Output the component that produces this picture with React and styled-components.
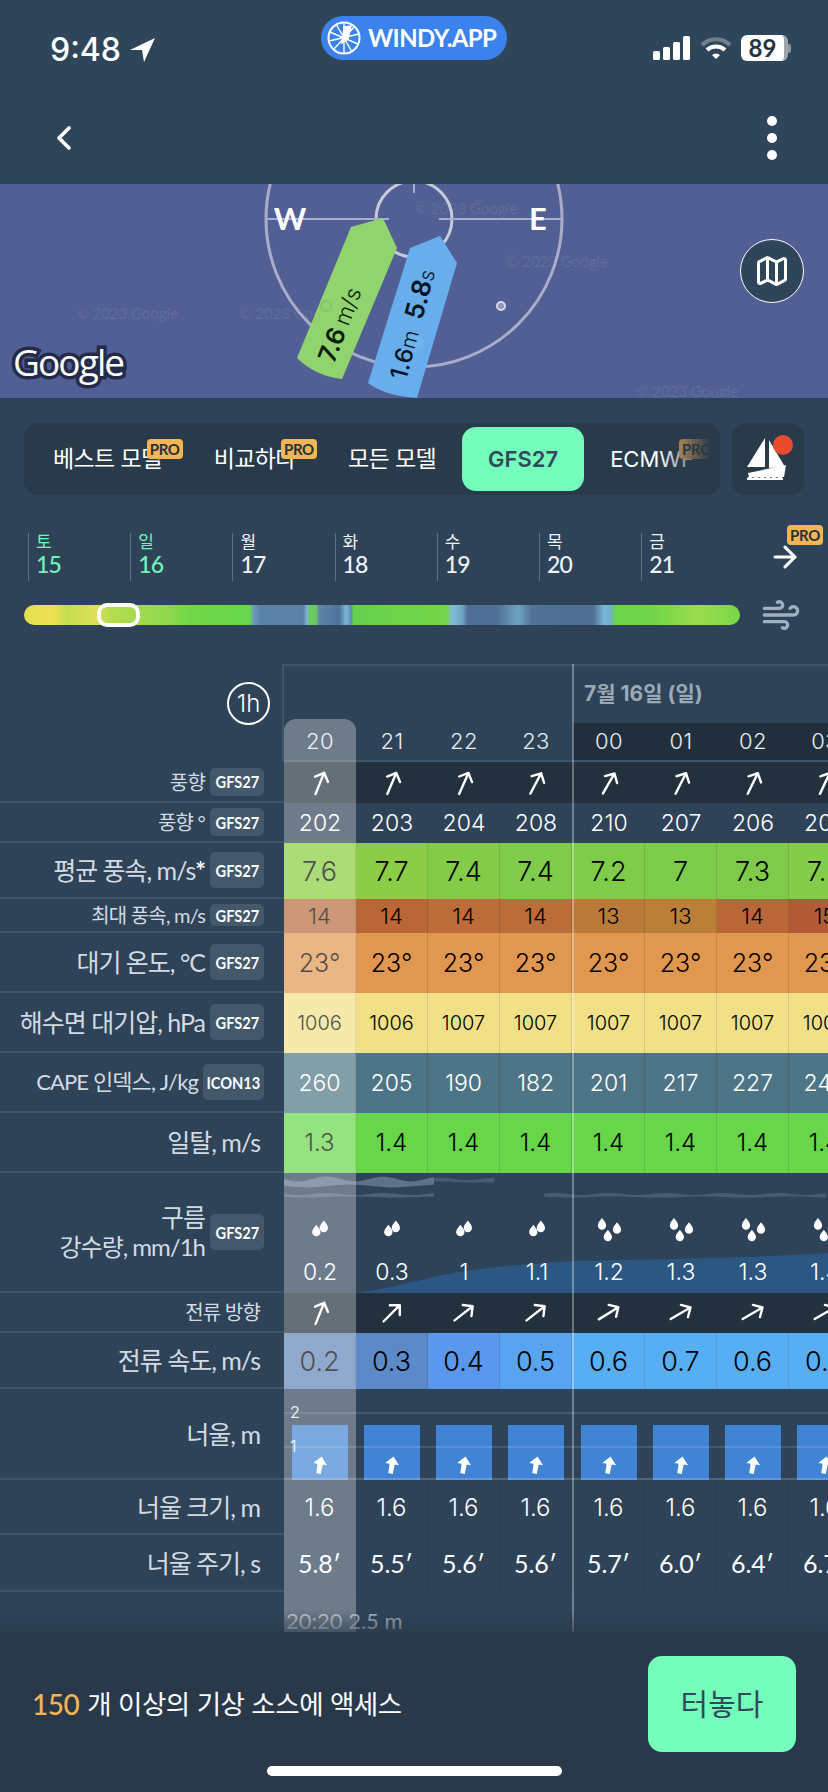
import React from "react";
import styled, { createGlobalStyle } from "styled-components";
import { ArrowRight, ChevronLeft, Map as MapIcon, Wind } from "lucide-react";

const NUM = `Inter, "Noto Sans", sans-serif`;
const KR = `Inter, "Noto Sans CJK KR", sans-serif`;
const LABEL = `Lato, "Noto Sans CJK KR", "Noto Sans", sans-serif`;

const Global = createGlobalStyle`
  html, body { margin: 0; padding: 0; background: #2e4358; }
  * { box-sizing: border-box; }
`;

const Page = styled.div`
  position: relative;
  width: 828px;
  height: 1792px;
  overflow: hidden;
  background: #2e4358;
  color: #fff;
  font-family: ${KR};
`;

/* top bar */
const Header = styled.header`
  height: 184px;
  background: #2f4559;
`;
const StatusBar = styled.div`
  height: 90px;
  display: grid;
  grid-template-columns: 321px 186px 1fr;
  align-items: start;
`;
const TimeBox = styled.div`
  display: flex;
  align-items: center;
  gap: 9px;
  padding: 31px 0 0 50px;
  font: 500 32px/38px ${NUM};
`;
const Pill = styled.div`
  margin-top: 16px;
  height: 44px;
  border-radius: 22px;
  background: #3b82ec;
  display: flex;
  align-items: center;
  gap: 7px;
  padding-left: 6px;
  font: 700 24px/1 ${LABEL};
  letter-spacing: -0.6px;
`;
const StatusIcons = styled.div`
  display: flex;
  align-items: center;
  gap: 9px;
  padding: 35px 0 0 146px;
`;
const Battery = styled.div`
  width: 47px;
  height: 26px;
  border-radius: 6px;
  background: #fff;
  color: #26333f;
  font: 700 24px/26px ${LABEL};
  text-align: center;
  margin-right: -4px;
  border-right: 4px solid #9aa5ae;
`;
const BatteryTip = styled.div`
  width: 3px;
  height: 9px;
  border-radius: 0 2px 2px 0;
  background: #8b98a3;
  margin-left: -5px;
`;
const NavBar = styled.div`
  height: 94px;
  display: flex;
  align-items: center;
  justify-content: space-between;
  padding: 2px 51px 0 44px;
`;
const Dots = styled.div`
  display: flex;
  flex-direction: column;
  gap: 7px;
  & > i {
    display: block;
    width: 10px;
    height: 10px;
    border-radius: 50%;
    background: #fff;
  }
`;

/* map */
const MapArea = styled.section`
  position: relative;
  height: 214px;
  overflow: hidden;
  background: #515f95;
`;
const MapDrawing = styled.svg`
  position: absolute;
  inset: 0;
  display: block;
`;
const Watermark = styled.span`
  position: absolute;
  left: ${(p) => p.$x}px;
  top: ${(p) => p.$y}px;
  font: 400 15px/18px ${LABEL};
  color: rgba(255, 255, 255, 0.09);
  white-space: nowrap;
`;
const GoogleMark = styled.span`
  position: absolute;
  left: 13px;
  top: 154px;
  font: 500 37px/48px "Open Sans", sans-serif;
  letter-spacing: -1.9px;
  color: #fff;
  -webkit-text-stroke: 7px #232b48;
  paint-order: stroke fill;
`;
const MapButton = styled.button`
  position: absolute;
  left: 740px;
  top: 55px;
  width: 64px;
  height: 64px;
  padding: 0;
  border-radius: 50%;
  border: 1.5px solid #fff;
  background: #2f4559;
  color: #fff;
  display: flex;
  align-items: center;
  justify-content: center;
`;

/* model tabs */
const TabsRow = styled.div`
  display: flex;
  gap: 12px;
  padding: 25px 24px 0;
`;
const Tabs = styled.nav`
  position: relative;
  width: 696px;
  height: 72px;
  border-radius: 14px;
  background: #293a4a;
  overflow: hidden;
  display: flex;
  align-items: center;
  padding-left: 3px;
  &::after {
    content: "";
    position: absolute;
    top: 0;
    bottom: 0;
    right: 0;
    width: 62px;
    background: linear-gradient(90deg, rgba(41, 58, 74, 0), #293a4a 85%);
  }
`;
const Tab = styled.div`
  position: relative;
  flex: none;
  height: 64px;
  padding: 0 26px;
  border-radius: 14px;
  display: flex;
  align-items: center;
  white-space: nowrap;
  font: ${(p) => (p.$active ? 600 : 400)} ${(p) => (p.$latin ? 22 : 23)}px/1 ${KR};
  letter-spacing: ${(p) => (p.$latin ? 0 : -0.6)}px;
  color: ${(p) => (p.$active ? "#2f4a5a" : "#fff")};
  background: ${(p) => (p.$active ? "#74fdbb" : "transparent")};
`;
const ProBadge = styled.span`
  position: absolute;
  top: ${(p) => p.$top ?? 12}px;
  right: ${(p) => p.$right ?? 5}px;
  width: 36px;
  height: 20px;
  border-radius: 4px;
  background: #f4b557;
  color: #26303a;
  font: 700 15px/20px ${LABEL};
  letter-spacing: -0.3px;
  text-align: center;
`;
const BoatButton = styled.div`
  width: 72px;
  height: 72px;
  border-radius: 14px;
  background: #293a4a;
  display: flex;
  align-items: center;
  justify-content: center;
`;
const BoatIcon = styled.svg`
  overflow: visible;
  margin-left: -3px;
`;

/* days strip */
const DaysRow = styled.div`
  position: relative;
  display: flex;
  height: 48px;
  margin-top: 38px;
  padding-left: 28px;
`;
const Day = styled.div`
  width: 102.2px;
  border-left: 1px solid #5f7283;
  padding-left: 7px;
  color: ${(p) => (p.$accent ? "#72f5b8" : "#eef2f5")};
`;
const DayName = styled.div`
  font: 400 17px/19px ${KR};
`;
const DayNum = styled.div`
  font: 500 23px/25px ${LABEL};
  letter-spacing: -0.8px;
`;
const MoreDays = styled.div`
  position: absolute;
  left: 768px;
  top: 7px;
  color: #fff;
`;

/* overview bar */
const BarRow = styled.div`
  display: flex;
  align-items: center;
  margin-top: 24px;
  padding-left: 24px;
  height: 20px;
`;
const Overview = styled.div`
  position: relative;
  width: 716px;
  height: 20px;
  border-radius: 10px;
  background: linear-gradient(90deg, #e6e04e 0%, #f0e050 4%, #c3de50 6%, #dfe056 10%, #b7dc50 12%, #8fd84d 20%, #72d84a 23%, #68d64a 30%, #65d54b 31.6%, #6c9dc0 32%, #5a82a8 33%, #5b80a8 39%, #7fb0d0 39.5%, #5fd05a 40%, #6cc860 40.8%, #5d85a8 41.2%, #4f7299 44%, #7ab5d8 45%, #5b8dae 45.7%, #66d04c 46%, #74d648 59%, #80bcd8 59.8%, #72a6c6 61.2%, #4e6e96 62%, #4f7096 66%, #70a4c4 69%, #4f7296 71%, #4f6f95 79.5%, #7cb8d8 81%, #70b0c8 82%, #6ad44c 82.5%, #72d64a 88%, #9cdc4c 94%, #7bd748 100%);
`;
const Thumb = styled.div`
  position: absolute;
  left: 73px;
  top: -2px;
  width: 43px;
  height: 24px;
  border-radius: 10px;
  border: 4px solid #fff;
`;
const WindBox = styled.div`
  margin-left: 21px;
  color: #9fb0c0;
  display: flex;
`;

/* table */
const Table = styled.section`
  position: relative;
  margin-top: 39px;
  height: 968px;
  overflow: hidden;
`;
const NowColumn = styled.div`
  position: absolute;
  left: 284px;
  top: 55px;
  bottom: 0;
  width: 72px;
  border-radius: 12px 12px 0 0;
  background: rgba(255, 255, 255, 0.3);
  pointer-events: none;
`;
const DayLine = styled.div`
  position: absolute;
  left: 572px;
  top: 0;
  bottom: 0;
  width: 2px;
  background: rgba(255, 255, 255, 0.33);
  pointer-events: none;
`;
const HeadRow = styled.div`
  display: flex;
  height: 98px;
`;
const HeadLabel = styled.div`
  width: 284px;
  flex: none;
  border-right: 2px solid #3e5568;
  display: flex;
  justify-content: flex-end;
  padding: 18px 12px 0 0;
`;
const OneHour = styled.div`
  width: 43px;
  height: 43px;
  border-radius: 50%;
  border: 2px solid #fff;
  font: 300 24px/39px ${NUM};
  text-align: center;
`;
const HeadTrack = styled.div`
  flex: 1;
  min-width: 0;
  border-top: 2px solid #3e5568;
  display: flex;
  flex-direction: column;
`;
const DateTitle = styled.div`
  height: 57px;
  padding: 13px 0 0 300px;
  font: 700 21px/30px ${KR};
  color: #9aa9b6;
`;
const Hours = styled.div`
  display: flex;
  height: 39px;
  border-bottom: 2px solid #3e5568;
`;
const Hour = styled.div`
  flex: none;
  width: 72px;
  font: 300 22px/37px ${NUM};
  letter-spacing: 0.4px;
  text-align: center;
  color: #e8edf1;
  background: ${(p) => (p.$dark ? "#212f3c" : "transparent")};
  &:nth-child(5) {
    margin-left: 1px;
  }
`;
const Row = styled.div`
  display: flex;
  height: ${(p) => p.$h}px;
`;
const Label = styled.div`
  position: relative;
  width: 284px;
  flex: none;
  display: flex;
  align-items: center;
  justify-content: flex-end;
  gap: 5px;
  padding-right: ${(p) => (p.$chip ? 20 : 24)}px;
  border-bottom: 2px solid #3e5568;
  text-align: right;
  white-space: nowrap;
  color: #d3dbe2;
  font: 400 ${(p) => p.$size}px/1.2 ${LABEL};
  letter-spacing: -0.04em;
`;
const Chip = styled.span`
  flex: none;
  width: ${(p) => p.$w || 54}px;
  height: ${(p) => p.$h}px;
  border-radius: 5px;
  background: #43586b;
  color: #fff;
  display: flex;
  align-items: center;
  justify-content: center;
  font: 700 17px/1 ${LABEL};
  letter-spacing: 0;
`;
const ChipText = styled.span`
  display: block;
  transform: scaleX(0.86);
`;
const Star = styled.b`
  color: #fff;
  font-weight: 700;
`;
const Small = styled.div`
  font-size: ${(p) => p.$size}px;
  line-height: 1.25;
`;
const Track = styled.div`
  position: relative;
  flex: 1;
  min-width: 0;
  display: flex;
  overflow: hidden;
`;
const Cell = styled.div`
  position: relative;
  flex: none;
  width: 72px;
  display: flex;
  align-items: center;
  justify-content: center;
  background: ${(p) => p.$bg || "transparent"};
  color: ${(p) => p.$color || "#fff"};
  font: ${(p) => (p.$narrow ? "400" : "300")} ${(p) => p.$size || 23}px/1 ${(p) => (p.$narrow ? LABEL : NUM)};
  ${(p) => (p.$rule ? "border-right: 1px solid rgba(0, 0, 0, 0.1);" : "")}
  &:nth-child(5) {
    margin-left: 1px;
  }
`;
const Gap = styled.div`
  position: absolute;
  left: 288px;
  width: 1px;
  top: 0;
  bottom: 0;
  background: ${(p) => p.$bg};
`;
const RainCell = styled(Cell)`
  flex-direction: column;
  justify-content: flex-start;
  padding-top: 45px;
`;
const Drops = styled.svg`
  display: block;
  width: 25px;
  height: 30px;
`;
const RainValue = styled.div`
  margin-top: 13px;
`;
const Strip = styled.svg`
  position: absolute;
  inset: 0;
  display: block;
`;
const SwellCell = styled(Cell)`
  align-items: flex-end;
`;
const SwellBar = styled.div`
  width: 56px;
  height: 55px;
  background: #4183d4;
  display: flex;
  align-items: flex-end;
  justify-content: center;
  padding-bottom: 6px;
`;
const GridLine = styled.div`
  position: absolute;
  left: 0;
  right: 0;
  top: ${(p) => p.$top}px;
  height: 2px;
  background: rgba(255, 255, 255, ${(p) => p.$alpha ?? 0.12});
`;
const Scale = styled.span`
  position: absolute;
  left: 6px;
  top: ${(p) => p.$top}px;
  font: 400 16px/18px ${NUM};
  color: #dfe6ea;
`;
const ScrollNote = styled.div`
  height: 40px;
  padding: 18px 0 0 286px;
  font: 400 22px/22px ${LABEL};
  color: rgba(255, 255, 255, 0.62);
`;

/* footer */
const Footer = styled.footer`
  position: relative;
  height: 160px;
  background: #29394a;
  display: flex;
  justify-content: space-between;
  padding: 24px 32px 0;
  &::before {
    content: "";
    position: absolute;
    left: 0;
    right: 0;
    top: -22px;
    height: 22px;
    background: linear-gradient(180deg, rgba(41, 57, 74, 0), rgba(41, 57, 74, 0.6));
  }
`;
const Offer = styled.div`
  height: 96px;
  display: flex;
  align-items: center;
  gap: 8px;
  font: 400 26.5px/1 ${KR};
  letter-spacing: -0.5px;
`;
const Gold = styled.span`
  color: #f4b557;
  font: 500 28px/1 ${LABEL};
`;
const Release = styled.button`
  width: 148px;
  height: 96px;
  border: 0;
  border-radius: 14px;
  background: #74fdbb;
  color: #2f4a5a;
  font: 400 30px/1 ${KR};
`;
const HomeBar = styled.div`
  position: absolute;
  left: 267px;
  top: 134px;
  width: 295px;
  height: 10px;
  border-radius: 5px;
  background: #fff;
`;

const HOURS = ["20", "21", "22", "23", "00", "01", "02", "03"];
const DIRS = [202, 203, 204, 208, 210, 207, 206, 205];
const CURRENT_DIRS = [22, 45, 52, 52, 58, 60, 60, 60];
const WIND = ["7.6", "7.7", "7.4", "7.4", "7.2", "7", "7.3", "7.5"];
const WIND_BG = ["#88cd3a", "#8ccd47", "#84cb48", "#80cb49", "#7fcb4a", "#7ccb4a", "#7fca4a", "#84cc4a"];
const GUST = ["14", "14", "14", "14", "13", "13", "14", "15"];
const GUST_BG = ["#b56a3c", "#b96737", "#bb6c39", "#ba6c39", "#bb7a38", "#bb7f38", "#b96738", "#b25a35"];
const PRESSURE = ["1006", "1006", "1007", "1007", "1007", "1007", "1007", "1007"];
const CAPE = ["260", "205", "190", "182", "201", "217", "227", "245"];
const SWELL_LIFT = ["1.3", "1.4", "1.4", "1.4", "1.4", "1.4", "1.4", "1.4"];
const RAIN = ["0.2", "0.3", "1", "1.1", "1.2", "1.3", "1.3", "1.4"];
const SPEED = ["0.2", "0.3", "0.4", "0.5", "0.6", "0.7", "0.6", "0.6"];
const SPEED_BG = ["#5f85b8", "#5c8ac8", "#5a98ee", "#59a4f1", "#58aef2", "#58aef2", "#58aef2", "#58aef2"];
const PERIOD = ["5.8′", "5.5′", "5.6′", "5.6′", "5.7′", "6.0′", "6.4′", "6.7′"];

function DirArrow({ deg }) {
  return (
    <svg width="30" height="30" viewBox="0 0 30 30" style={{ transform: `rotate(${deg}deg)` }}>
      <path d="M15 27V4M8 11l7-7 7 7" fill="none" stroke="#fff" strokeWidth="2.4" strokeLinecap="round" strokeLinejoin="round" />
    </svg>
  );
}

function SwellArrow() {
  return (
    <svg width="14" height="18" viewBox="0 0 16 20" style={{ transform: "rotate(10deg)" }}>
      <path d="M8 0l8 9h-5l-.4 11H5.4L5 9H0z" fill="#fff" />
    </svg>
  );
}

function RainDrops({ many }) {
  const drop = (x, y) => `M${x} ${y}c3 4 5 6 5 9a5 5 0 0 1-10 0c0-3 2-5 5-9z`;
  return many ? (
    <Drops viewBox="0 0 30 36">
      <path fill="#fff" d={drop(6, 0)} />
      <path fill="#fff" d={drop(24, 5)} />
      <path fill="#fff" d={drop(13, 14)} />
    </Drops>
  ) : (
    <Drops viewBox="0 0 30 36">
      <path fill="#fff" d={drop(19, 3)} />
      <path fill="#fff" d={drop(10, 8)} />
    </Drops>
  );
}

// wobbly band for the cloud layers
function band(x0, x1, y, h) {
  let top = `M${x0} ${y}`;
  let bottom = "";
  for (let x = x0; x <= x1; x += 6) {
    const a = Math.sin(x / 9) * h * 0.35;
    const b = Math.sin(x / 14) * h * 0.2;
    top += `L${x} ${(y + a).toFixed(1)}`;
    bottom = `L${x} ${(y + h + b).toFixed(1)}` + bottom;
  }
  return `${top}${bottom}Z`;
}

function ModelChip({ h, w, children }) {
  return (
    <Chip $h={h} $w={w}>
      <ChipText>{children}</ChipText>
    </Chip>
  );
}

function TopBar() {
  return (
    <Header>
      <StatusBar>
        <TimeBox>
          9:48
          <svg width="26" height="26" viewBox="0 0 26 26">
            <path d="M0 13L25 1 14 25l-2-12z" fill="#fff" />
          </svg>
        </TimeBox>
        <Pill>
          <svg width="34" height="34" viewBox="0 0 34 34" fill="none" stroke="#fff" strokeWidth="1.4">
            <circle cx="17" cy="17" r="15.5" strokeWidth="2" />
            <path d="M3 11l28 12M9 3l16 28M17 2v30M2 20l30-7M28 5L6 29" />
            <path d="M17 6l7-1-3 13-6 4z" fill="#fff" />
          </svg>
          WINDY.APP
        </Pill>
        <StatusIcons>
          <svg width="38" height="24" viewBox="0 0 38 24" fill="#fff">
            <rect x="0" y="15" width="7" height="9" rx="1.5" />
            <rect x="10" y="11" width="7" height="13" rx="1.5" />
            <rect x="20" y="6" width="7" height="18" rx="1.5" />
            <rect x="30" y="0" width="7" height="24" rx="1.5" />
          </svg>
          <svg width="32" height="24" viewBox="0 0 32 24" fill="none" strokeWidth="4">
            <path d="M2 9a20 20 0 0 1 28 0" stroke="#6f808e" />
            <path d="M7 14a13 13 0 0 1 18 0" stroke="#fff" />
            <path d="M12 19l4 4 4-4a6 6 0 0 0-8 0z" fill="#fff" stroke="none" />
          </svg>
          <Battery>89</Battery>
          <BatteryTip />
        </StatusIcons>
      </StatusBar>
      <NavBar>
        <ChevronLeft size={40} strokeWidth={2.2} color="#fff" />
        <Dots>
          <i />
          <i />
          <i />
        </Dots>
      </NavBar>
    </Header>
  );
}

function MapPanel() {
  return (
    <MapArea>
      <Watermark $x={415} $y={15}>© 2023 Google</Watermark>
      <Watermark $x={506} $y={68}>© 2023 Google</Watermark>
      <Watermark $x={76} $y={120}>© 2023 Google</Watermark>
      <Watermark $x={239} $y={120}>© 2023 Google</Watermark>
      <Watermark $x={636} $y={198}>© 2023 Google</Watermark>
      <MapDrawing width="828" height="214" viewBox="0 184 828 214">
        <circle cx="414" cy="219" r="148" fill="none" stroke="#a9aec8" strokeWidth="3" />
        <circle cx="414" cy="219" r="38" fill="none" stroke="#c6cad9" strokeWidth="3" />
        <path d="M266 219H389M439 219H562M414 184V193" stroke="#a9aec8" strokeWidth="2" fill="none" />
        <circle cx="501" cy="306" r="4" fill="#8e95b5" stroke="#d8dae5" strokeWidth="2" />
        <text x="290" y="230" textAnchor="middle" fill="#fff" fontFamily={LABEL} fontWeight="700" fontSize="31">W</text>
        <text x="538" y="230" textAnchor="middle" fill="#fff" fontFamily={LABEL} fontWeight="700" fontSize="31">E</text>
        <path d="M383 218L397 248 342 379Q315 376 297 358L351 227Z" fill="#90d36f" />
        <path d="M440 236L457 263 417 398Q385 396 368 383L410 248Z" fill="#68aeed" />
        <circle cx="326" cy="306" r="5" fill="none" stroke="#84c664" strokeWidth="2" />
        <circle cx="415" cy="343" r="9" fill="#72b3ee" />
        <text transform="translate(334 364) rotate(-69)" fontFamily={NUM} fill="#0c1a10">
          <tspan fontSize="25" fontWeight="600">7.6</tspan>
          <tspan fontSize="22" fontWeight="300" dx="5">m/s</tspan>
        </text>
        <text transform="translate(406 381) rotate(-75)" fontFamily={NUM} fill="#08141f">
          <tspan fontSize="24" fontWeight="500">1.6</tspan>
          <tspan fontSize="21" fontWeight="300">m</tspan>
          <tspan fontSize="26" fontWeight="600" dx="12">5.8</tspan>
          <tspan fontSize="21" fontWeight="300">s</tspan>
        </text>
      </MapDrawing>
      <GoogleMark>Google</GoogleMark>
      <MapButton aria-label="map">
        <MapIcon size={36} strokeWidth={2} />
      </MapButton>
    </MapArea>
  );
}

function ModelTabs() {
  return (
    <TabsRow>
      <Tabs>
        <Tab>베스트 모델<ProBadge>PRO</ProBadge></Tab>
        <Tab>비교하다<ProBadge>PRO</ProBadge></Tab>
        <Tab>모든 모델</Tab>
        <Tab $active $latin>GFS27</Tab>
        <Tab $latin>ECMWF<ProBadge>PRO</ProBadge></Tab>
      </Tabs>
      <BoatButton>
        <BoatIcon width="44" height="44" viewBox="0 0 44 44" fill="#fff">
          <path d="M20 1V30H2z" />
          <path d="M24 3L40 30 24 31z" />
          <path d="M3 36L41 28 39 40H4z" />
          <path d="M2 41q3-3 6 0q3-3 6 0q3-3 6 0q3-3 6 0q3-3 6 0q3-3 6 0v2H2z" />
          <circle cx="38" cy="8" r="10" fill="#ea4b2e" />
        </BoatIcon>
      </BoatButton>
    </TabsRow>
  );
}

function DaysStrip() {
  const days = [["토", 15], ["일", 16], ["월", 17], ["화", 18], ["수", 19], ["목", 20], ["금", 21]];
  return (
    <>
      <DaysRow>
        {days.map(([name, num], i) => (
          <Day key={num} $accent={i < 2}>
            <DayName>{name}</DayName>
            <DayNum>{num}</DayNum>
          </Day>
        ))}
        <MoreDays>
          <ArrowRight size={34} strokeWidth={2.2} />
          <ProBadge $top={-15} $right={-21}>PRO</ProBadge>
        </MoreDays>
      </DaysRow>
      <BarRow>
        <Overview>
          <Thumb />
        </Overview>
        <WindBox>
          <Wind size={40} strokeWidth={2} />
        </WindBox>
      </BarRow>
    </>
  );
}

function Values({ list, ...rest }) {
  return list.map((v, i) => (
    <Cell key={i} {...rest}>
      {v}
    </Cell>
  ));
}

function ForecastTable() {
  return (
    <Table>
      <HeadRow>
        <HeadLabel>
          <OneHour>1h</OneHour>
        </HeadLabel>
        <HeadTrack>
          <DateTitle>7월 16일 (일)</DateTitle>
          <Hours>
            {HOURS.map((h, i) => (
              <Hour key={h} $dark={i > 3}>{h}</Hour>
            ))}
          </Hours>
        </HeadTrack>
      </HeadRow>

      <Row $h={41}>
        <Label $size={20} $chip>풍향<ModelChip h={28}>GFS27</ModelChip></Label>
        <Track>
          {DIRS.map((d, i) => (
            <Cell key={i} $bg="#22313d"><DirArrow deg={d - 180} /></Cell>
          ))}
          <Gap $bg="#22313d" />
        </Track>
      </Row>
      <Row $h={40}>
        <Label $size={20} $chip>풍향 °<ModelChip h={28}>GFS27</ModelChip></Label>
        <Track>
          <Values list={DIRS} />
        </Track>
      </Row>
      <Row $h={56}>
        <Label $size={25} $chip>
          <span>평균 풍속, m/s<Star>*</Star></span>
          <ModelChip h={36}>GFS27</ModelChip>
        </Label>
        <Track>
          {WIND.map((v, i) => (
            <Cell key={i} $bg={WIND_BG[i]} $color="#000" $size={27} $rule>{v}</Cell>
          ))}
          <Gap $bg="#7fcb4a" />
        </Track>
      </Row>
      <Row $h={34}>
        <Label $size={20} $chip>최대 풍속, m/s<ModelChip h={22}>GFS27</ModelChip></Label>
        <Track>
          {GUST.map((v, i) => (
            <Cell key={i} $bg={GUST_BG[i]} $color="#000" $size={22} $rule>{v}</Cell>
          ))}
          <Gap $bg="#bb7a38" />
        </Track>
      </Row>
      <Row $h={60}>
        <Label $size={25} $chip>대기 온도, °C<ModelChip h={36}>GFS27</ModelChip></Label>
        <Track>
          <Values list={HOURS.map(() => "23°")} $bg="#e0974f" $color="#000" $size={25} $rule />
          <Gap $bg="#e0974f" />
        </Track>
      </Row>
      <Row $h={60}>
        <Label $size={25} $chip>해수면 대기압, hPa<ModelChip h={36}>GFS27</ModelChip></Label>
        <Track>
          <Values list={PRESSURE} $bg="#f1e088" $color="#000" $size={20} $rule />
          <Gap $bg="#f1e088" />
        </Track>
      </Row>
      <Row $h={60}>
        <Label $size={22} $chip>CAPE 인덱스, J/kg<ModelChip h={36} w={61}>ICON13</ModelChip></Label>
        <Track>
          <Values list={CAPE} $bg="#4d7585" $size={23} $rule />
          <Gap $bg="#4d7585" />
        </Track>
      </Row>
      <Row $h={60}>
        <Label $size={25}>일탈, m/s</Label>
        <Track>
          <Values list={SWELL_LIFT} $bg="#68d64b" $color="#000" $size={24} $rule />
          <Gap $bg="#68d64b" />
        </Track>
      </Row>

      <Row $h={120}>
        <Label $size={25} $chip>
          <div>
            구름
            <Small $size={24}>강수량, mm/1h</Small>
          </div>
          <ModelChip h={36}>GFS27</ModelChip>
        </Label>
        <Track>
          <Strip width="544" height="120" viewBox="0 0 544 120">
            <path d="M0 120H72C110 115 140 105 170 100C190 97 210 93 289 88C400 86 480 84 544 80V120Z" fill="#2c5783" />
            <path d={band(0, 150, 6, 7)} fill="#5c7286" />
            <path d={band(150, 210, 6, 3)} fill="#445b70" />
            <path d={band(0, 150, 21, 3)} fill="#4b6276" />
            <path d={band(260, 544, 21, 3)} fill="#465c71" />
          </Strip>
          {RAIN.map((v, i) => (
            <RainCell key={i}>
              <RainDrops many={i > 3} />
              <RainValue>{v}</RainValue>
            </RainCell>
          ))}
        </Track>
      </Row>

      <Row $h={40}>
        <Label $size={20}>전류 방향</Label>
        <Track>
          {CURRENT_DIRS.map((d, i) => (
            <Cell key={i} $bg="#22313d"><DirArrow deg={d} /></Cell>
          ))}
          <Gap $bg="#22313d" />
        </Track>
      </Row>
      <Row $h={56}>
        <Label $size={25}>전류 속도, m/s</Label>
        <Track>
          {SPEED.map((v, i) => (
            <Cell key={i} $bg={SPEED_BG[i]} $color="#000" $size={27} $rule>{v}</Cell>
          ))}
          <Gap $bg="#58aef2" />
        </Track>
      </Row>

      <Row $h={91}>
        <Label $size={25}>너울, m</Label>
        <Track>
          {HOURS.map((h) => (
            <SwellCell key={h}>
              <SwellBar><SwellArrow /></SwellBar>
            </SwellCell>
          ))}
          <GridLine $top={23} />
          <GridLine $top={57} />
          <GridLine $top={89} $alpha={0.18} />
          <Scale $top={14}>2</Scale>
          <Scale $top={48}>1</Scale>
        </Track>
      </Row>
      <Row $h={55}>
        <Label $size={25}>너울 크기, m</Label>
        <Track>
          <Values list={HOURS.map(() => "1.6")} $size={24} $rule />
        </Track>
      </Row>
      <Row $h={57}>
        <Label $size={25}>너울 주기, s</Label>
        <Track>
          <Values list={PERIOD} $size={25} $narrow $rule />
        </Track>
      </Row>
      <ScrollNote>20:20 2.5 m</ScrollNote>

      <NowColumn />
      <DayLine />
    </Table>
  );
}

export default function App() {
  return (
    <Page>
      <Global />
      <TopBar />
      <MapPanel />
      <ModelTabs />
      <DaysStrip />
      <ForecastTable />
      <Footer>
        <Offer>
          <Gold>150</Gold>
          <span>개 이상의 기상 소스에 액세스</span>
        </Offer>
        <Release>터놓다</Release>
        <HomeBar />
      </Footer>
    </Page>
  );
}
